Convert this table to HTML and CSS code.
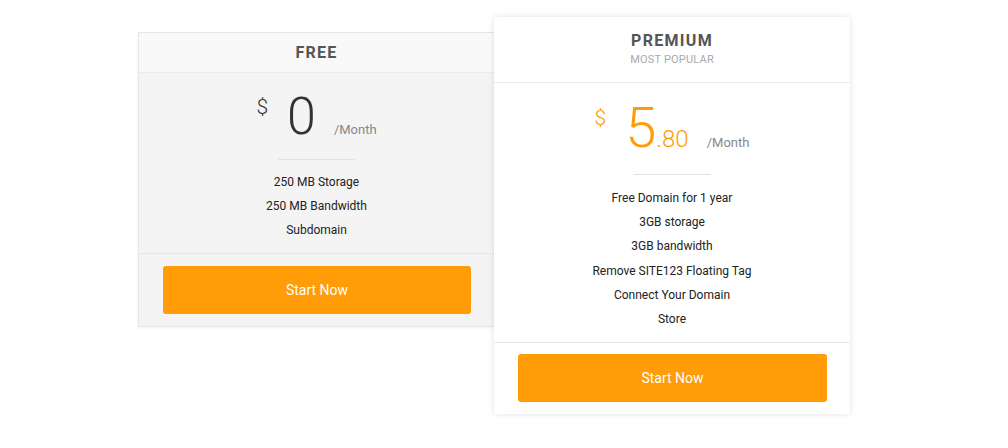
FILE: index.html
```html
<!DOCTYPE html>
<html>
<head>
<meta charset="utf-8">
<link rel="stylesheet" href="styles.css">
</head>
<body>
<div class="plans">
  <div class="card card-free">
    <div class="head head-free">
      <div class="title">FREE</div>
    </div>
    <div class="body">
      <div class="price">
        <span class="cur">$</span>
        <span class="num">0</span>
        <span class="per">/Month</span>
      </div>
      <div class="divider"></div>
      <ul class="features">
        <li>250 MB Storage</li>
        <li>250 MB Bandwidth</li>
        <li>Subdomain</li>
      </ul>
    </div>
    <div class="foot">
      <a class="btn">Start Now</a>
    </div>
  </div>
  <div class="card card-premium">
    <div class="head head-premium">
      <div class="title">PREMIUM</div>
      <div class="sub">MOST POPULAR</div>
    </div>
    <div class="body body-premium">
      <div class="price price-premium">
        <span class="cur">$</span>
        <span class="num">5</span><span class="dec">.80</span>
        <span class="per">/Month</span>
      </div>
      <div class="divider"></div>
      <ul class="features">
        <li>Free Domain for 1 year</li>
        <li>3GB storage</li>
        <li>3GB bandwidth</li>
        <li>Remove SITE123 Floating Tag</li>
        <li>Connect Your Domain</li>
        <li>Store</li>
      </ul>
    </div>
    <div class="foot foot-premium">
      <a class="btn">Start Now</a>
    </div>
  </div>
</div>
</body>
</html>
```
FILE: styles.css
```css
* { box-sizing: border-box; }
html, body { margin: 0; padding: 0; background: #fff; }
body {
  font-family: Roboto, "Liberation Sans", sans-serif;
  color: #222;
  width: 1008px;
  height: 448px;
  overflow: hidden;
}
.plans {
  display: flex;
  align-items: flex-start;
  padding-left: 138px;
}
.card {
  width: 356px;
  display: flex;
  flex-direction: column;
}
.card-free {
  margin-top: 32px;
  background: #f4f4f4;
  border: 1px solid #e6e6e6;
  border-right: none;
  box-shadow: 0 1px 3px rgba(0,0,0,0.06);
}
.card-premium {
  margin-top: 17px;
  background: #fff;
  box-shadow: 0 0 6px rgba(0,0,0,0.12);
  position: relative;
  z-index: 1;
}
.head {
  text-align: center;
  border-bottom: 1px solid #ebebeb;
}
.head-free {
  height: 40px;
  background: #f9f9f9;
  padding-top: 11px;
}
.head-premium {
  height: 66px;
  padding-top: 15px;
}
.title {
  font-size: 16px;
  font-weight: 700;
  letter-spacing: 1.3px;
  color: #555;
  line-height: 18px;
}
.sub {
  font-size: 11px;
  color: #aaa;
  letter-spacing: 0.2px;
  line-height: 14px;
  margin-top: 3px;
}
.body {
  padding: 18px 0 10px;
  text-align: center;
  border-bottom: 1px solid #e8e8e8;
}
.body-premium {
  padding-top: 17px;
  padding-bottom: 11px;
}
.price {
  display: flex;
  justify-content: center;
  align-items: baseline;
  line-height: 1;
  color: #333;
}
.cur {
  font-size: 21px;
  font-weight: 300;
  align-self: flex-start;
  margin-top: 6px;
  margin-right: 19px;
}
.num {
  font-size: 52px;
  font-weight: 300;
}
.dec {
  font-size: 24px;
  font-weight: 300;
}
.per {
  font-size: 13px;
  color: #888;
  margin-left: 18px;
}
.price-premium { color: #ff9c07; }
.price-premium .num { font-size: 56px; }
.price-premium .cur { margin-right: 19px; margin-top: 8px; }
.divider {
  width: 77px;
  height: 1px;
  background: #e2e2e2;
  margin: 16px auto 10px;
}
.body-premium .divider { margin-top: 18px; margin-bottom: 11px; }
.features {
  list-style: none;
  margin: 0;
  padding: 0;
  font-size: 12px;
  line-height: 24.2px;
  color: #222;
}
.foot {
  padding: 12px 23px 12px 24px;
}
.foot-premium {
  padding-top: 11px;
}
.btn {
  display: flex;
  align-items: center;
  justify-content: center;
  height: 48px;
  background: #ff9c07;
  border-radius: 3px;
  color: #fff;
  font-size: 14px;
  font-weight: 400;
}
```
